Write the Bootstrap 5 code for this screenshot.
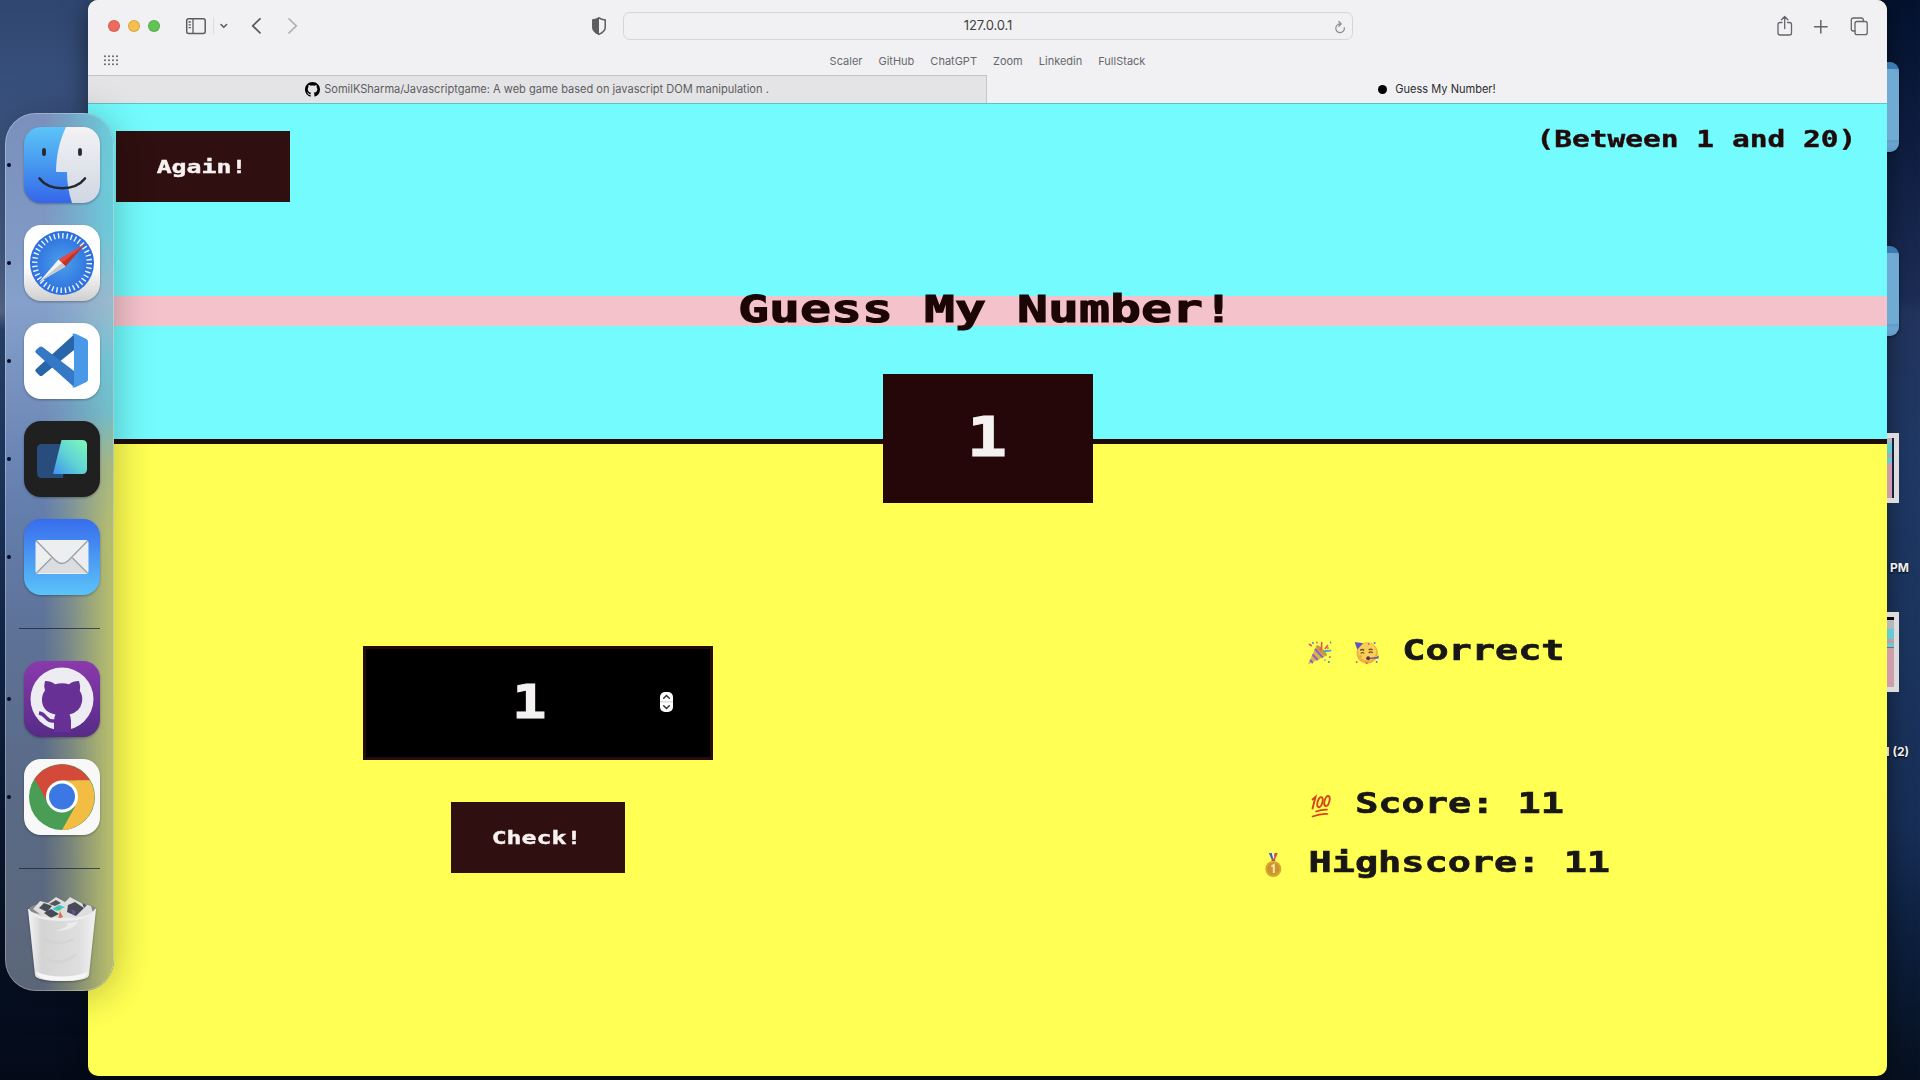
<!DOCTYPE html>
<html lang="en">
<head>
<meta charset="utf-8">
<title>Guess My Number!</title>
<meta name="viewport" content="width=device-width, initial-scale=1">
<link href="https://cdn.jsdelivr.net/npm/bootstrap@5.3.0/dist/css/bootstrap.min.css" rel="stylesheet">
<style>
  body { width: 1920px; height: 1080px; overflow: hidden; font-family: Inter, "Liberation Sans", sans-serif; }
  .desktop { width: 1920px; height: 1080px;
    background: linear-gradient(180deg, #2f4670 0, #3a527f 110px, #46608a 250px, #5a6f92 312px, #2b4673 330px, #1e3862 500px, #10264a 680px, #0b1b37 800px, #071225 950px, #040a18 1080px); }
  .desktop-edge { left: 1800px; width: 120px; height: 1080px;
    background: linear-gradient(180deg, #04122f 0, #0d1d40 130px, #1c2c54 300px, #22345c 312px, #1f3865 450px, #1c355f 640px, #172e56 830px, #0d1f3d 940px, #06101f 1080px); }
  .desk-folder { left: 1850px; width: 49px; height: 90px; border-radius: 9px; background: linear-gradient(180deg, #3c7ab4 0 7px, #6aa5cf 7px, #6ca8d0 76px, #5c96c2 77px, #6aa6cf 82px, #5d9bc7); box-shadow: 0 1px 3px rgba(0,0,0,.5); }
  .desk-folder::after { content: ""; position: absolute; inset: 7px 0 12px; border-radius: 0 8px 0 0; background: #6fabd3; }
  .folder-a { top: 62px; } .folder-b { top: 246px; }
  .desk-shot { left: 1840px; width: 59px; border: 5px solid #dcdcdc; background: linear-gradient(180deg, #b9b6ba 0 8%, #62ced2 8% 27%, #c49aab 27% 31%, #62ced2 31% 41%, #88606f 41% 42%, #cf9dac 42%); }
  .shot-a { top: 433px; height: 70px; border-right-width: 5px; box-shadow: inset -2px 0 #18203f; } .shot-b { top: 612px; height: 80px; background: linear-gradient(180deg, #080810 0 4%, #b9b6ba 4% 17%, #62ced2 17% 32%, #c49aab 32% 37%, #62ced2 37% 43%, #88606f 43% 45%, #cf9dac 45%); }
  .desk-label { right: 11px; font-size: 12px; line-height: 16px; font-weight: 700; color: #eee; text-shadow: 0 1px 2px #000; white-space: nowrap; }
  .label-a { top: 560px; } .label-b { top: 744px; }

  .browser { left: 88px; top: 0; width: 1799px; height: 1076px; border-radius: 10px; background: #ffff54; overflow: hidden; }
  .browser-shade { left: 88px; top: 0; width: 1799px; height: 1076px; border-radius: 10px; box-shadow: 0 6px 26px rgba(0,0,0,.5); }
  .toolbar { height: 75px; background: #f1f1f4; }
  .toolbar-main { height: 52px; padding-left: 20px; }
  .traffic { width: 12px; height: 12px; border-radius: 50%; border: 1px solid rgba(0,0,0,.12); }
  .t-red { background: #ed6a5e; } .t-yellow { background: #f4bf4f; } .t-green { background: #61c554; }
  .shield { margin-left: 31px; }
  .url-box { width: 730px; height: 28px; margin-left: 16px; border: 1px solid #d6d6d9; border-radius: 7px; font-size: 13px; color: #3f3f42; letter-spacing: -.1px; }
  .url-reload { right: 6px; top: 7px; }
  .bookmarks { height: 16px; font-size: 11px; line-height: 18px; color: #68686b; gap: 16px; }
  .grid-dots { left: 16px; top: 3px; }
  .tab-strip { height: 28px; font-size: 11.05px; }
  .tab-off { width: 899px; background: #e4e4e6; border-top: 1px solid #c2c2c5; border-right: 1px solid #c6c6c8; color: #5c5c5f; }
  .tab-on { background: #f1f1f4; color: #2c2c2e; }
  .tab-dot { width: 9px; height: 9px; border-radius: 50%; background: #000; }

  .pixel { display: inline-block; font-family: "DejaVu Sans Mono", monospace; font-weight: 700; white-space: pre; transform: scaleX(1.38); -webkit-text-stroke: .4px currentColor; }
  .game-head { height: 341px; background: #73fbfd; border-top: 1px solid #5cc3cc; border-bottom: 5px solid #200a0a; padding-top: 27px; }
  .game-bar { padding: 0 31px 0 28px; height: 71px; }
  .game-btn { width: 174px; height: 71px; border: 0; border-radius: 0; background: #2f0f0f; color: #f7f2f1; font-size: 18px; line-height: 70px; padding: 0 2px 0 0; text-align: center; }
  .hint { font-size: 23px; line-height: 20px; margin-top: -2px; color: #200a0a; transform: scaleX(1.283); transform-origin: right; }
  .title-band { margin: 94px 0 0; height: 30px; background: #f4c2cb; color: #1b0505; padding-right: 3px; }
  .title-band .pixel { font-size: 37.4px; line-height: 27px; transform: scaleX(1.377); -webkit-text-stroke-width: 1px; }
  .secret { top: 374px; left: 795px; width: 210px; height: 129px; background: #250709; color: #f5f1f0; }
  .secret .pixel { font-size: 56px; line-height: 126px; margin-right: 3px; transform: scaleX(1.2); -webkit-text-stroke-width: 1px; }
  .game-body { padding-top: 202px; }
  .guess { width: 350px; height: 114px; border: 3px solid #250b0b; background: #000; color: #f5f1f0; }
  .guess .pixel { font-size: 47px; line-height: 106px; margin-right: 17px; transform: scaleX(1.22); -webkit-text-stroke-width: 1px; }
  .spinner-ctl { right: 37px; top: 43px; }
  .check-gap { margin-top: 42px; }
  .result { font-size: 28px; line-height: 30px; color: #181616; margin-right: 3px; transform: scaleX(1.376); -webkit-text-stroke-width: .7px; }
  .result svg { width: 17.4px; height: 24px; vertical-align: -5px; }
  .res-a { margin-top: -10px; } .res-b { margin-top: 123px; } .res-c { margin-top: 29px; }

  .dock { left: 5px; top: 113px; width: 109px; height: 878px; border-radius: 31px; overflow: hidden; padding: 14px 0 0 19px;
    background: linear-gradient(180deg, #7b90bc 0, #7f98c4 120px, #84a0cb 190px, #7590bd 280px, #647fae 390px, #5e7298 520px, #5a6a86 680px, #5b6678 878px); }
  .dock::before { content: ""; position: absolute; inset: 0; background: linear-gradient(180deg, #6ccad8 0, #6dc9d8 120px, #9bb9cd 190px, #70c4d2 250px, #72bdc8 300px, #a5b683 350px, #b4bc6e 420px, #b5bb6b 878px);
    -webkit-mask-image: linear-gradient(90deg, transparent 35%, rgba(0,0,0,.35) 60%, #000 95%); mask-image: linear-gradient(90deg, transparent 35%, rgba(0,0,0,.35) 60%, #000 95%); }
  .dock::after { content: ""; position: absolute; inset: 0; border-radius: 31px; border: 1px solid rgba(255,255,255,.28); }
  .dock-shade { left: 5px; top: 113px; width: 109px; height: 878px; border-radius: 31px; box-shadow: 0 4px 40px rgba(0,0,0,.28); }
  .dock-item { position: relative; z-index: 1; width: 76px; height: 76px; margin-bottom: 22px; }
  .dock-item > svg { display: block; overflow: visible; filter: drop-shadow(0 1px 1px rgba(0,0,0,.3)); }
  .running::before { content: ""; position: absolute; left: -17px; top: 36px; width: 4px; height: 4px; border-radius: 50%; background: #050a28; }
  .dock-sep { position: relative; z-index: 1; width: 81px; height: 1px; background: rgba(20,30,50,.7); margin: 33px 0 32px -5px; }
</style>
<script src="https://cdn.jsdelivr.net/npm/bootstrap@5.3.0/dist/js/bootstrap.bundle.min.js"></script>
</head>
<body class="m-0">
<div class="desktop position-relative overflow-hidden">
  <div class="desktop-edge position-absolute top-0"></div>
  <div class="browser-shade position-absolute"></div>
  <div class="desk-folder folder-a position-absolute"></div>
  <div class="desk-folder folder-b position-absolute"></div>
  <div class="desk-shot shot-a position-absolute"></div>
  <div class="desk-label label-a position-absolute">PM</div>
  <div class="desk-shot shot-b position-absolute"></div>
  <div class="desk-label label-b position-absolute">l (2)</div>

  <div class="browser position-absolute">
    <div class="toolbar">
      <div class="toolbar-main d-flex align-items-center">
        <span class="traffic t-red"></span><span class="traffic t-yellow ms-2"></span><span class="traffic t-green ms-2"></span>
        <svg class="flex-shrink-0" width="400" height="24" viewBox="160 14 400 24" fill="none" stroke="#5d5d60" stroke-width="1.5" stroke-linecap="round" stroke-linejoin="round">
          <rect x="186.700" y="18.700" width="18.500" height="14.700" rx="2"/><path d="M193 19v14M189 22h1.500M189 24.800h1.500M189 27.600h1.500" stroke-width="1.300"/>
          <path d="M213.500 17.500v17" stroke="#dddde0" stroke-width="1"/><path d="M221 24.500l2.800 2.800 2.800-2.800" stroke-width="1.600"/>
          <path d="M260 18.800l-7.300 7 7.300 7" stroke-width="1.800"/><path d="M289 18.800l7.300 7-7.300 7" stroke="#b2b2b5" stroke-width="1.700"/>
        </svg>
        <svg class="shield flex-shrink-0" width="16" height="20" viewBox="0 0 16 20"><path d="M8 1.800C6.500 3 4 3.800 1.800 4v7.500c0 3.300 3.500 5.600 6.200 6.900 2.700-1.300 6.200-3.600 6.200-6.900V4C12 3.800 9.500 3 8 1.800z" fill="none" stroke="#5d5d60" stroke-width="1.500"/><path d="M8 1.800C6.500 3 4 3.800 1.800 4v7.500c0 3.300 3.500 5.600 6.200 6.900z" fill="#5d5d60"/></svg>
        <div class="url-box position-relative d-flex align-items-center justify-content-center">127.0.0.1
          <svg class="url-reload position-absolute" width="12" height="14" viewBox="0 0 12 14" fill="none" stroke="#8c8c8f" stroke-width="1.200" stroke-linecap="round"><path d="M10.300 7.500A4.300 4.300 0 1 1 6.500 4M4.800 1.500L7.200 4 4.800 6.300"/></svg>
        </div>
        <svg class="ms-auto flex-shrink-0" width="112" height="24" viewBox="1775 13 112 24" fill="none" stroke="#66666a" stroke-width="1.300" stroke-linecap="round" stroke-linejoin="round">
          <path d="M1782 21.500h-2a2 2 0 0 0-2 2v8.500a2 2 0 0 0 2 2h9.500a2 2 0 0 0 2-2v-8.500a2 2 0 0 0-2-2h-2M1784.700 27.500V15.800M1781.500 18.700l3.200-3.200 3.200 3.200"/>
          <path d="M1814.500 25.800h12.600M1820.800 19.500v12.600" stroke-width="1.500"/>
          <rect x="1855" y="20.500" width="12.200" height="13.200" rx="2"/><path d="M1855 30h-1.700a2 2 0 0 1-2-2v-9a2 2 0 0 1 2-2h8a2 2 0 0 1 2 2v1.500"/>
        </svg>
      </div>
      <div class="bookmarks position-relative d-flex justify-content-center">
        <svg class="grid-dots position-absolute" width="14" height="11" viewBox="0 0 14 11" fill="#5c5c5f"><g id="dotrow"><circle cx="1" cy="1.200" r=".95"/><circle cx="5" cy="1.200" r=".95"/><circle cx="9" cy="1.200" r=".95"/><circle cx="13" cy="1.200" r=".95"/></g><use href="#dotrow" y="4"/><use href="#dotrow" y="8"/></svg>
        <span>Scaler</span><span>GitHub</span><span>ChatGPT</span><span>Zoom</span><span>Linkedin</span><span>FullStack</span>
      </div>
    </div>
    <div class="tab-strip d-flex">
      <div class="tab-off d-flex align-items-center justify-content-center">
        <svg class="me-1" width="15" height="15" viewBox="0 0 16 16" fill="#000"><path d="M8 0C3.580 0 0 3.580 0 8c0 3.540 2.290 6.530 5.470 7.590.4.070.55-.17.55-.38 0-.19-.01-.82-.01-1.490-2.010.37-2.530-.49-2.690-.94-.09-.23-.48-.94-.82-1.130-.28-.15-.68-.52-.01-.53.63-.01 1.080.58 1.230.82.720 1.210 1.870.87 2.330.66.070-.52.280-.87.510-1.070-1.780-.2-3.640-.89-3.640-3.950 0-.87.310-1.590.820-2.150-.08-.2-.36-1.020.08-2.120 0 0 .67-.21 2.200.82.640-.18 1.320-.27 2-.27s1.360.09 2 .27c1.530-1.040 2.200-.82 2.200-.82.440 1.100.160 1.920.080 2.120.510.560.820 1.270.820 2.150 0 3.070-1.870 3.750-3.650 3.950.290.250.540.730.540 1.480 0 1.070-.01 1.930-.01 2.200 0 .21.150.46.550.38A8.010 8.010 0 0 0 16 8c0-4.420-3.580-8-8-8z"/></svg>
        <span>SomilKSharma/Javascriptgame: A web game based on javascript DOM manipulation .</span>
      </div>
      <div class="tab-on flex-grow-1 d-flex align-items-center justify-content-center"><span class="tab-dot me-2"></span><span>Guess My Number!</span></div>
    </div>

    <header class="game-head">
      <div class="game-bar d-flex justify-content-between align-items-start">
        <button class="btn game-btn"><span class="pixel">Again!</span></button>
        <span class="pixel hint">(Between 1 and 20)</span>
      </div>
      <h1 class="title-band d-flex justify-content-center align-items-start"><span class="pixel">Guess My Number!</span></h1>
    </header>
    <div class="secret position-absolute text-center"><span class="pixel">1</span></div>

    <main class="game-body row g-0">
      <section class="col-6 d-flex flex-column align-items-center">
        <div class="guess position-relative text-center"><span class="pixel">1</span>
          <svg class="spinner-ctl position-absolute" width="13" height="20" viewBox="0 0 13 20"><rect width="13" height="20" rx="5" fill="#fff"/><path d="M0 9.800h13" stroke="#ddd" stroke-width="1.500"/><path d="M3.700 6.200L6.500 3.500l2.800 2.700M3.700 13.800l2.800 2.700 2.800-2.700" fill="none" stroke="#333" stroke-width="1.500" stroke-linecap="round"/></svg>
        </div>
        <button class="btn game-btn check-gap"><span class="pixel">Check!</span></button>
      </section>
      <section class="col-6 d-flex flex-column align-items-center">
        <div class="pixel result res-a"><svg viewBox="0 0 24 24" preserveAspectRatio="none"><path d="M0 23.500L8.500 4.500 19 14.500z" fill="#d9b24a"/><path d="M8.500 4.500c-1 3 7 11.500 10.500 10 1.500-1-7.500-12-10.500-10z" fill="#c99b35"/><path d="M7 8l8 8.500M4.500 13.500l5.500 5.500M2 19l3 3" stroke="#8a5fd0" stroke-width="1.900"/><path d="M12 9c3-1.500 1-5 2-8" fill="none" stroke="#e2556f" stroke-width="1.700"/><path d="M16 11c2-2.500 5 0 8-2" fill="none" stroke="#4aa1dc" stroke-width="1.900"/><path d="M17 8l3-4M1 3l3 2" stroke="#e2556f" stroke-width="1.600"/><g fill="#3f83d8"><circle cx="5" cy="2" r="1"/><circle cx="23" cy="1.500" r="1"/><circle cx="21" cy="21" r="1"/><circle cx="17" cy="19" r=".8"/></g><g fill="#e06a50"><circle cx="22" cy="16" r="1"/><circle cx="9" cy="1.500" r=".9"/><circle cx="20" cy="7" r="1"/></g></svg> <svg viewBox="0 0 24 24" preserveAspectRatio="none"><circle cx="12.500" cy="12" r="10.700" fill="#f0b040"/><circle cx="12.500" cy="10.500" r="9" fill="#f8cf58"/><path d="M0 1l8.500 1.200L2.500 8.500z" fill="#6250c4"/><path d="M5.500 9.500q2-2 4 0M14 9q2-2 4 0M6 12.500q2-2 3.500 0M14 12q2-2 4 0" fill="none" stroke="#76491c" stroke-width="1.200"/><path d="M13 17l9-1 2-1.500v3L14 18z" fill="#6650bd"/><circle cx="13.500" cy="17.200" r="2" fill="#5b3c3a"/><g fill="#e2556f"><circle cx="14" cy="3" r=".9"/><circle cx="2" cy="21" r="1"/><circle cx="12" cy="22" r="1"/><circle cx="6" cy="15.500" r="1.300" fill="#f3a25a"/></g><g fill="#3f83d8"><circle cx="20" cy="2" r="1"/><circle cx="22" cy="21" r="1"/></g></svg> Correct</div>
        <div class="pixel result res-b"><svg viewBox="0 0 24 24" preserveAspectRatio="none" fill="none" stroke="#d9421f" stroke-width="1.900" stroke-linecap="round"><path d="M4.500 5.500L7.500 3 4.500 14.500"/><ellipse cx="12" cy="8.200" rx="2.400" ry="5.200" transform="rotate(15 12 8.200)"/><ellipse cx="19" cy="7" rx="2.400" ry="5.200" transform="rotate(15 19 7)"/><path d="M8 17.500q6-2 11-1.800M4.500 22.500q8-3 15-2.500" stroke-width="1.700"/></svg> Score: 11</div>
        <div class="pixel result res-c"><svg viewBox="0 0 24 24" preserveAspectRatio="none"><path d="M7.500 0h3l3.500 8h-3z" fill="#3d62b8"/><path d="M16.500 0h-3L10 8h3z" fill="#c9524c"/><path d="M10.500 0h1.500l1 4-1 2z" fill="#fff"/><circle cx="12" cy="16" r="8" fill="#d8a52f"/><circle cx="12" cy="15.800" r="6" fill="#cb9430"/><path d="M10 13.500l2.500-1.500v8" fill="none" stroke="#f8e6a0" stroke-width="2"/></svg> Highscore: 11</div>
      </section>
    </main>
  </div>

  <div class="dock-shade position-absolute"></div>
  <nav class="dock position-absolute d-block">
    <div class="dock-item running"><svg width="76" height="76" viewBox="0 0 76 76">
      <defs>
        <linearGradient id="fa" x2="0" y2="1"><stop stop-color="#5cc4f8"/><stop offset=".5" stop-color="#4698ef"/><stop offset="1" stop-color="#3566ea"/></linearGradient>
        <linearGradient id="fb" x2="0" y2="1"><stop stop-color="#f3f2f4"/><stop offset="1" stop-color="#cfd7e3"/></linearGradient>
        <linearGradient id="sf" x2="0" y2="1"><stop stop-color="#fff"/><stop offset=".55" stop-color="#fff"/><stop offset="1" stop-color="#cfcfcf"/></linearGradient>
        <radialGradient id="sd"><stop stop-color="#4aa0ec"/><stop offset="1" stop-color="#2c6ddd"/></radialGradient>
        <linearGradient id="wp" x1="0" y1="1" x2="1" y2="0"><stop stop-color="#3f92f2"/><stop offset=".45" stop-color="#5fd0d5"/><stop offset="1" stop-color="#7dfbba"/></linearGradient>
        <linearGradient id="ml" x2="0" y2="1"><stop stop-color="#376ded"/><stop offset="1" stop-color="#5cc3f9"/></linearGradient>
        <linearGradient id="gh" x2="0" y2="1"><stop stop-color="#8a3aac"/><stop offset="1" stop-color="#562b86"/></linearGradient>
        <linearGradient id="tr" x2="1" y2="0"><stop stop-color="#f5f5f5"/><stop offset=".2" stop-color="#d4d4d5"/><stop offset=".75" stop-color="#dededf"/><stop offset="1" stop-color="#f2f2f2"/></linearGradient>
        <clipPath id="rr"><rect width="76" height="76" rx="17"/></clipPath>
      </defs>
      <g clip-path="url(#rr)"><path d="M0 0h76v76H0z" fill="url(#fa)"/><path d="M42 0C35 15 32.500 28 32 44q0 1 1 1h10q0 16 5 31h28V0z" fill="url(#fb)"/></g>
      <path d="M20 23v4M56 23v4" stroke="#25282c" stroke-width="3.800" stroke-linecap="round"/><path d="M15.500 51.500c10 13 35 13 45.500 0" fill="none" stroke="#25282c" stroke-width="2.600" stroke-linecap="round"/></svg></div>
    <div class="dock-item running"><svg width="76" height="76" viewBox="0 0 76 76"><rect width="76" height="76" rx="17" fill="url(#sf)"/><circle cx="38" cy="38" r="32" fill="url(#sd)"/><circle cx="38" cy="38" r="27.300" fill="none" stroke="#eaf5ff" stroke-width="5.500" stroke-dasharray="1.400 2.888"/><path d="M61 19L34.500 34.500l7 7z" fill="#e4483e"/><path d="M61 19L38 38l3.500 3.500z" fill="#bb352e"/><path d="M15 57l19.500-22.500 7 7z" fill="#f4f4f4"/><path d="M15 57l23-19 3.500 3.500z" fill="#c6c9ce"/></svg></div>
    <div class="dock-item running"><svg width="76" height="76" viewBox="0 0 76 76"><rect width="76" height="76" rx="17" fill="#fff"/><path d="M50 11.500L12 46q-1.500 1.500 0 3l3.500 3.500q1.500 1 3 0L50 27z" fill="#2965a9"/><path d="M50 64L12 30q-1.500-1.500 0-3l3.500-3q1.500-1 3 0L50 48z" fill="#3478c6"/><path d="M48 11q1.500 1 2 3v46q0 3-2 4 2 1 4 0l10.500-5q1.500-1 1.500-2.500V18.500q0-1.500-1.500-2.500L52 11q-2-.8-4 0z" fill="#4a99e8"/></svg></div>
    <div class="dock-item running"><svg width="76" height="76" viewBox="0 0 76 76"><rect width="76" height="76" rx="17" fill="#202021"/><path d="M18 23h24l-3 34H18q-5 0-5-5V28q0-5 5-5z" fill="#284d7c"/><path d="M37.500 19H58q5 0 5 5v24q0 5-5 5H29z" fill="url(#wp)"/></svg></div>
    <div class="dock-item running mb-0"><svg width="76" height="76" viewBox="0 0 76 76"><rect width="76" height="76" rx="17" fill="url(#ml)"/><rect x="11.500" y="21" width="53" height="34" rx="3" fill="#eceef0"/><path d="M12.500 54L28 38l10 7 10-7 15.500 16z" fill="#dcdde0"/><path d="M12.500 22L31 41q7 7 14 0l18.500-19M12.500 54L27.500 39M63.500 54L48.500 39" fill="none" stroke="#9ba3aa" stroke-width="1.400"/></svg></div>
    <div class="dock-sep"></div>
    <div class="dock-item running"><svg width="76" height="76" viewBox="0 0 76 76"><rect width="76" height="76" rx="17" fill="url(#gh)"/><circle cx="38" cy="38" r="31.500" fill="#eeecf3"/><path d="M21 20q6 0 10 3.200 7-1.700 14 0 4-3.200 10-3.200 2 5 .8 10Q59 34 58 41q-2 10-12.500 12.500Q47 56 47 60v11H30V60q0-4 1.500-6.500Q19 51 18 40q-.5-6 3-10.500-1.500-5 0-9.500z" fill="#673094"/><path d="M15 52q4 .5 7 4.500 3 4 8.500 3.500" fill="none" stroke="#673094" stroke-width="3.500"/></svg></div>
    <div class="dock-item running mb-0"><svg width="76" height="76" viewBox="0 0 76 76"><rect width="76" height="76" rx="17" fill="#f8f8f8"/><circle cx="38" cy="38" r="33" fill="#4a9d55"/><path d="M10.500 20A33 33 0 0 1 66 21.500H38L23.500 43z" fill="#d34a3b"/><path d="M66 21.500A33 33 0 0 1 38 71l14-25V21.500z" fill="#f2bd42"/><path d="M38 21.500h28L58 45l-7 3z" fill="#f2bd42"/><circle cx="38" cy="37.500" r="16" fill="#fff"/><circle cx="38" cy="37.500" r="13" fill="#3b78e4"/></svg></div>
    <div class="dock-sep"></div>
    <div class="dock-item"><svg width="76" height="84" viewBox="0 0 76 84"><path d="M4 8l7 66q1 6 27 6t27-6l7-66z" fill="url(#tr)"/><path d="M12 71q26 9 52 0-1 9-26 9t-26-9z" fill="#f6f6f7"/><ellipse cx="38" cy="8" rx="33" ry="7" fill="#858789"/><path d="M9 8l7-8 8 2 8-6 9 5 5-5 11 6 10 3 2 7-16 6-29 1z" fill="#dededf"/><path d="M15 7l5-5 8 3-5 6zM44 4l7-3 9 6-8 8-9-4zM20 12l7-4 8 5-8 4z" fill="#464b54"/><path d="M25 3l7-4 5 3-6 3zM58 2l5 2-3 3z" fill="#555"/><path d="M28 8l7-4 6 2-8 4z" fill="#3dc6df"/><path d="M32 6l6 1-3 3z" fill="#59c559"/><path d="M36 10l3 6-5 2z" fill="#d9744b"/><path d="M47 8l5 3-3 3z" fill="#7a4aa8"/><path d="M5 8q3 9 33 9t33-9v3q-8 9-33 9T5 11z" fill="#ededee"/><path d="M30 30q20 0 25-10-8 2-12 2 2 5-13 8z" fill="#ebebec"/><path d="M20 38q12 8 30 0M22 58q16 8 30-5" stroke="#cbcbcd" stroke-width="3" fill="none" opacity=".35"/></svg></div>
  </nav>
</div>
</body>
</html>
